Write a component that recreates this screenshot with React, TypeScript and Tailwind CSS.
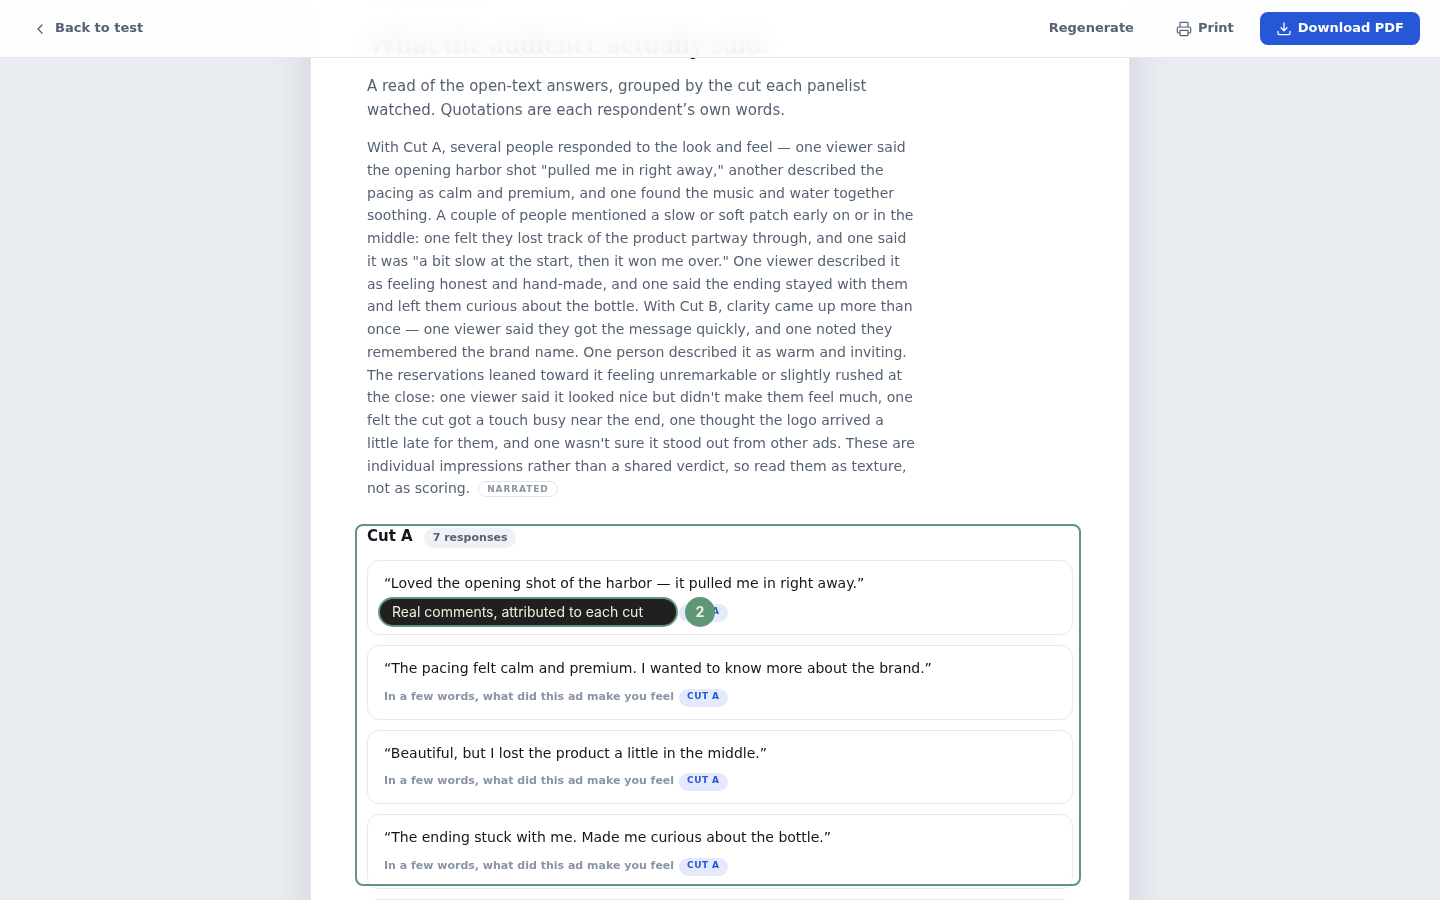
import { ChevronLeft, Printer } from "lucide-react";

const quotes = [
    "Loved the opening shot of the harbor — it pulled me in right away.",
    "The pacing felt calm and premium. I wanted to know more about the brand.",
    "Beautiful, but I lost the product a little in the middle.",
    "The ending stuck with me. Made me curious about the bottle.",
    "Soothing. The music and the water went well together.",
];

const DownloadIcon = () => {
    return (
        <svg className="mt-0.5 size-4" viewBox="0 0 16 16" fill="none" stroke="currentColor" strokeWidth="1.3" strokeLinecap="round" strokeLinejoin="round" aria-hidden="true">
            <path d="M8 2v7.500M5 6.700l3 3 3-3" />
            <path d="M2 10.500v1.700c0 .8.600 1.400 1.400 1.400h9.200c.8 0 1.400-.6 1.400-1.400v-1.700" />
        </svg>
    );
}

const TopBar = () => {
    return (
        <header className="sticky top-0 z-20 flex h-[58px] items-center justify-between border-b border-[#e5e8ec] bg-white/90 px-5 text-[13px] leading-4 font-semibold text-[#566273] backdrop-blur-md backdrop-saturate-150">
            <a href="#test" className="flex items-center gap-[7px] px-3 pb-0.5">
                <ChevronLeft className="mt-0.5 size-4" strokeWidth={2} />
                Back to test
            </a>
            <div className="flex items-center gap-2.5">
                <button type="button" className="h-8 px-4 pb-0.5">Regenerate</button>
                <button type="button" className="flex h-8 items-center gap-1.5 px-4 pb-0.5">
                    <Printer className="mt-0.5 size-4" strokeWidth={1.8} />
                    Print
                </button>
                <button type="button" className="flex h-[33px] items-center gap-1.5 rounded-lg bg-[#2657d6] px-4 pb-0.5 text-white">
                    <DownloadIcon />
                    Download PDF
                </button>
            </div>
        </header>
    );
}

const QuoteCard = ({ text }: {text: string}) => {
    return (
        <li className="flex flex-col gap-[9px] rounded-xl border border-[#e6e9ee] px-4 pt-[11px] pb-3">
            <p className="text-sm leading-relaxed text-[#12161d]">“{text}”</p>
            <div className="flex items-start gap-[5px]">
                <span className="text-[11px] leading-4 font-semibold text-[#8a95a4]">In a few words, what did this ad make you feel</span>
                <span className="rounded-full bg-[#e4eafb] px-2 pb-1 text-[9px] leading-[14px] font-bold tracking-wider text-[#2657d6]">CUT A</span>
            </div>
        </li>
    );
}

const Callout = () => {
    return (
        <div className="pointer-events-none absolute top-0 -right-2 -left-3 h-[362px] rounded-lg border-2 border-[#5f9879]">
            <div className="absolute top-[71px] left-[21px] flex items-center gap-[7px] font-['Inter',sans-serif]">
                <div className="flex h-[30px] w-[300px] items-center rounded-full border-2 border-[#5f9879] bg-[#1c1c1c]/98 px-3 text-sm text-[#f3eedc]">
                    Real comments, attributed to each cut
                </div>
                <div className="flex size-[30px] items-center justify-center rounded-full bg-[#5f9879] text-sm font-bold text-[#f3eedc]">2</div>
            </div>
        </div>
    );
}

export default function App() {
    return (
        <div className="min-h-screen bg-[#e9ecf1] font-['DejaVu_Sans',sans-serif]">
            <TopBar />
            <main className="mx-auto -mt-[72px] max-w-[820px] border-x border-[#e2e5ea] bg-white px-14 pb-14 shadow-[0_12px_40px_rgba(15,23,42,0.12)]">
                <p className="w-fit rounded-full bg-[#dbe4fb] px-2 pb-[5px] text-[11px] leading-4 font-bold text-[#2657d6]">IN THEIR WORDS</p>
                <h1 className="mt-5 font-['Liberation_Serif',serif] text-[29px] leading-8 font-bold text-[#12161d]">What the audience actually said.</h1>
                <p className="mt-[15px] max-w-[550px] text-[15px] leading-6 text-[#566273]">
                    A read of the open-text answers, grouped by the cut each panelist watched. Quotations are each respondent’s own words.
                </p>
                <p className="mt-3.5 max-w-[550px] text-sm leading-relaxed text-[#566273]">
                    With Cut A, several people responded to the look and feel — one viewer said the opening harbor shot "pulled me in right away," another described the pacing as calm and premium, and one found the music and water together soothing. A couple of people mentioned a slow or soft patch early on or in the middle: one felt they lost track of the product partway through, and one said it was "a bit slow at the start, then it won me over." One viewer described it as feeling honest and hand-made, and one said the ending stayed with them and left them curious about the bottle. With Cut B, clarity came up more than once — one viewer said they got the message quickly, and one noted they remembered the brand name. One person described it as warm and inviting. The reservations leaned toward it feeling unremarkable or slightly rushed at the close: one viewer said it looked nice but didn't make them feel much, one felt the cut got a touch busy near the end, one thought the logo arrived a little late for them, and one wasn't sure it stood out from other ads. These are individual impressions rather than a shared verdict, so read them as texture, not as scoring.
                    <span className="ml-2 inline-block rounded-full border border-[#e2e6ec] px-2 align-middle text-[9px] leading-[14px] font-semibold tracking-widest text-[#8a95a4]">NARRATED</span>
                </p>
                <section className="relative mt-6">
                    <div className="flex items-end gap-[11px]">
                        <h2 className="text-[15px] leading-6 font-bold text-[#12161d]">Cut A</h2>
                        <span className="rounded-full bg-[#eef1f6] px-[9px] text-[11px] leading-5 font-semibold text-[#566273]">7 responses</span>
                    </div>
                    <ul className="mt-3 flex flex-col gap-2.5">
                        {quotes.map((quote) => (
                            <QuoteCard key={quote} text={quote} />
                        ))}
                    </ul>
                    <Callout />
                </section>
            </main>
        </div>
    );
}
